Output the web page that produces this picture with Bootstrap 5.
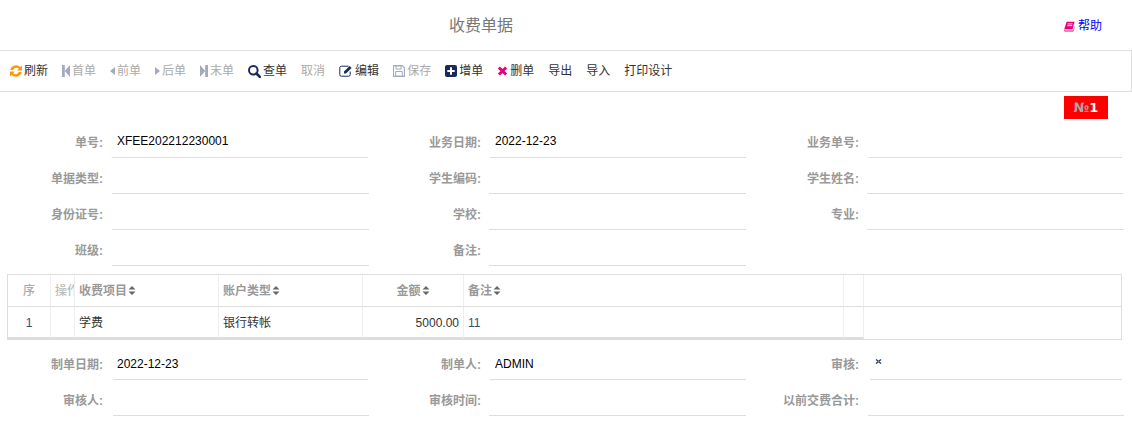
<!DOCTYPE html>
<html lang="zh">
<head>
<meta charset="utf-8">
<title>收费单据</title>
<link href="https://cdn.jsdelivr.net/npm/bootstrap@5.3.0/dist/css/bootstrap.min.css" rel="stylesheet">
<style>
html,body{height:438px;overflow:hidden}
body{font-family:"Liberation Sans","Noto Sans CJK SC",sans-serif;font-size:12px;line-height:16px;color:#333;background:#fff}
.page-head{height:50px}
.page-title{width:962px;font-size:16px;line-height:20px;color:#777;font-weight:400;margin:0;text-align:center;padding-top:1px}
.help-link{color:#00f;text-decoration:none;margin-left:102px;gap:3px;padding-top:2px}
.tool-bar{height:42px;border:1px solid #ddd;border-left:0;padding-left:10px;gap:14px;width:1132px}
.tool-item{gap:2px;color:#333;white-space:nowrap}
.tool-item.off{color:#aaa}
.tool-item svg{display:block;flex:none}
.no-wrap{height:30px;padding:4px 24px 0 0}
.no-tag{width:44px;height:23px;background:#f00;color:#fff;font:bold 13px/23px "DejaVu Sans",sans-serif;text-align:center}
.no-tag span{color:#aaa}
.f-row{height:36px}
.f-cell{height:36px}
.f-a{width:369px}.f-b{width:377px}.f-c{width:376px}
.f-label{color:#999;font-weight:700;text-align:right;padding-top:13px;flex:none}
.f-a .f-label{width:103px;margin-right:1px}
.f-b .f-label{width:112px;margin-right:1px}
.f-c .f-label{width:113px}
.f-field{flex:1;margin-left:8px;border-bottom:1px solid #ddd;color:#000;padding:11px 0 0 5px}
.f-s7{margin-left:7px}.f-s9{margin-left:9px}.f-s10{margin-left:10px}.f-s11{margin-left:11px}
.f-e1{margin-right:1px}.f-en1{margin-right:-1px}.f-en2{margin-right:-2px}
.tb-wrap{margin:8px 10px 0 7px;border:1px solid #ddd;height:66px;width:1115px}
.grid-t{table-layout:fixed;border-collapse:separate;border-spacing:0;width:1113px;margin:0}
.grid-t th,.grid-t td{padding:0 4px;border-right:1px solid #eee;overflow:hidden;white-space:nowrap}
.grid-t th{height:32px;border-bottom:1px solid #ddd;color:#999;font-weight:700}
.grid-t td{height:32px;border-bottom:2px solid #ddd;color:#333;font-weight:400;padding-top:1px}
.grid-t .c-end{border-right:0;border-bottom:0}
.grid-t td.c-end{height:30px}
.grid-t th.c-end{border-bottom:1px solid #ddd}
.c-no{color:#2b5278!important;text-align:center}
.c-blue{color:#2b5278!important}
.c-no-h{text-align:center;color:#aaa!important;font-weight:500!important}
.c-op{color:#bbb!important;font-weight:500!important}
.sort-i{display:inline-block;vertical-align:-1px;margin-left:1px}
.foot-form{margin-top:4px}
.foot-form .f-field{padding-top:12px}
.mark-x{display:block;margin-top:2px}
</style>
</head>
<body>
<header class="page-head d-flex align-items-center">
  <h1 class="page-title">收费单据</h1>
  <a class="help-link d-flex align-items-center" href="#">
    <svg width="11" height="11" viewBox="0 0 11 11"><path d="M2.600.8h8L8.600 8.300H.9C.4 8.300.2 8.800.5 9.200c.2.3.5.4.9.4h7.900l1.200-5v1.900L9.500 10.600H1.300C.5 10.600 0 9.900 0 9.100Z" fill="#e6007e"/><path d="M3.600 2.900h5M3.200 4.700h5" stroke="#fff" stroke-width=".9"/></svg>
    <span>帮助</span>
  </a>
</header>
<nav class="tool-bar d-flex align-items-center">
  <div class="tool-item d-flex align-items-center">
    <svg width="12" height="12" viewBox="0 0 12 12"><path d="M12 .5v5H7.200l1.700-1.700A3.400 3.400 0 0 0 3.200 5H.3A6 6 0 0 1 10.300 2ZM0 11.500v-5h4.800L3.100 8.200A3.400 3.400 0 0 0 8.800 7h2.900A6 6 0 0 1 1.700 10Z" fill="#ff9800"/></svg>
    <span>刷新</span>
  </div>
  <div class="tool-item off d-flex align-items-center">
    <svg width="8" height="12" viewBox="0 0 8 12"><path d="M0 0h2.800v12H0ZM8 0v12L2.800 6Z" fill="#a3a9c0"/></svg>
    <span>首单</span>
  </div>
  <div class="tool-item off d-flex align-items-center">
    <svg width="5" height="8" viewBox="0 0 5 8"><path d="M5 0v8L0 4Z" fill="#a3a9c0"/></svg>
    <span>前单</span>
  </div>
  <div class="tool-item off d-flex align-items-center">
    <svg width="5" height="8" viewBox="0 0 5 8"><path d="M0 0v8l5-4Z" fill="#a3a9c0"/></svg>
    <span>后单</span>
  </div>
  <div class="tool-item off d-flex align-items-center">
    <svg width="8" height="12" viewBox="0 0 8 12"><path d="M8 0H5.200v12H8ZM0 0v12L5.200 6Z" fill="#a3a9c0"/></svg>
    <span>末单</span>
  </div>
  <div class="tool-item d-flex align-items-center">
    <svg width="13" height="13" viewBox="0 0 13 13"><circle cx="5.300" cy="5.300" r="4.300" fill="none" stroke="#1b2a5c" stroke-width="2"/><path d="M8.500 8.500l3.300 3.300" stroke="#1b2a5c" stroke-width="2.600" stroke-linecap="round"/></svg>
    <span>查单</span>
  </div>
  <div class="tool-item off d-flex align-items-center"><span>取消</span></div>
  <div class="tool-item d-flex align-items-center">
    <svg width="14" height="12" viewBox="0 0 14 12"><path d="M9.500 1.200H2.300A1.500 1.500 0 0 0 .8 2.700v7A1.500 1.500 0 0 0 2.300 11.200h7.400a1.500 1.500 0 0 0 1.500-1.500V6.500" fill="none" stroke="#1b2a5c" stroke-width="1"/><path d="M5 6.500 10.600.9 12.600 2.900 7 8.500H5Z" fill="#1b2a5c"/></svg>
    <span>编辑</span>
  </div>
  <div class="tool-item off d-flex align-items-center">
    <svg width="12" height="12" viewBox="0 0 12 12"><path d="M.6.6h8.600l2.200 2.200v8.600H.6Z" fill="none" stroke="#a3a9c0" stroke-width="1.100"/><path d="M3 .8h5v3.300H3ZM2.700 6.500h6.600v4.700H2.700Z" fill="none" stroke="#a3a9c0"/></svg>
    <span>保存</span>
  </div>
  <div class="tool-item d-flex align-items-center">
    <svg width="12" height="12" viewBox="0 0 12 12"><rect width="12" height="12" rx="2" fill="#1b2a5c"/><path d="M5 2.300h2V5h2.700v2H7v2.700H5V7H2.300V5H5Z" fill="#fff"/></svg>
    <span>增单</span>
  </div>
  <div class="tool-item d-flex align-items-center">
    <svg width="11" height="10" viewBox="0 0 11 10"><path d="M1.900 1.500 9.100 8.500M9.100 1.500 1.900 8.500" stroke="#e6007e" stroke-width="3"/></svg>
    <span>删单</span>
  </div>
  <div class="tool-item d-flex align-items-center"><span>导出</span></div>
  <div class="tool-item d-flex align-items-center"><span>导入</span></div>
  <div class="tool-item d-flex align-items-center"><span>打印设计</span></div>
</nav>
<div class="no-wrap d-flex justify-content-end">
  <div class="no-tag"><span>№</span>1</div>
</div>
<section>
  <div class="f-row d-flex">
    <div class="f-cell f-a d-flex"><label class="f-label">单号:</label><div class="f-field f-e1">XFEE202212230001</div></div>
    <div class="f-cell f-b d-flex"><label class="f-label">业务日期:</label><div class="f-field">2022-12-23</div></div>
    <div class="f-cell f-c d-flex"><label class="f-label">业务单号:</label><div class="f-field f-s10"></div></div>
  </div>
  <div class="f-row d-flex">
    <div class="f-cell f-a d-flex"><label class="f-label">单据类型:</label><div class="f-field"></div></div>
    <div class="f-cell f-b d-flex"><label class="f-label">学生编码:</label><div class="f-field f-s7"></div></div>
    <div class="f-cell f-c d-flex"><label class="f-label">学生姓名:</label><div class="f-field f-en1"></div></div>
  </div>
  <div class="f-row d-flex">
    <div class="f-cell f-a d-flex"><label class="f-label">身份证号:</label><div class="f-field"></div></div>
    <div class="f-cell f-b d-flex"><label class="f-label">学校:</label><div class="f-field f-s7"></div></div>
    <div class="f-cell f-c d-flex"><label class="f-label">专业:</label><div class="f-field f-en2"></div></div>
  </div>
  <div class="f-row d-flex">
    <div class="f-cell f-a d-flex"><label class="f-label">班级:</label><div class="f-field"></div></div>
    <div class="f-cell f-b d-flex"><label class="f-label">备注:</label><div class="f-field f-s7"></div></div>
  </div>
</section>
<div class="tb-wrap">
  <table class="grid-t">
    <colgroup><col style="width:43px"><col style="width:24px"><col style="width:144px"><col style="width:144px"><col style="width:101px"><col style="width:380px"><col style="width:20px"><col></colgroup>
    <thead>
      <tr>
        <th class="c-no-h">序</th>
        <th class="c-op">操作</th>
        <th>收费项目<svg class="sort-i" width="8" height="11" viewBox="0 0 8 11"><path d="M.5 4.500 4 1l3.500 3.500ZM.5 6.500 4 10l3.500-3.500Z" fill="#666"/></svg></th>
        <th>账户类型<svg class="sort-i" width="8" height="11" viewBox="0 0 8 11"><path d="M.5 4.500 4 1l3.500 3.500ZM.5 6.500 4 10l3.500-3.500Z" fill="#666"/></svg></th>
        <th class="text-center">金额<svg class="sort-i" width="8" height="11" viewBox="0 0 8 11"><path d="M.5 4.500 4 1l3.500 3.500ZM.5 6.500 4 10l3.500-3.500Z" fill="#666"/></svg></th>
        <th>备注<svg class="sort-i" width="8" height="11" viewBox="0 0 8 11"><path d="M.5 4.500 4 1l3.500 3.500ZM.5 6.500 4 10l3.500-3.500Z" fill="#666"/></svg></th>
        <th></th>
        <th class="c-end"></th>
      </tr>
    </thead>
    <tbody>
      <tr>
        <td class="c-no">1</td>
        <td></td>
        <td>学费</td>
        <td>银行转帐</td>
        <td class="text-end">5000.00</td>
        <td class="c-blue">11</td>
        <td></td>
        <td class="c-end"></td>
      </tr>
    </tbody>
  </table>
</div>
<section class="foot-form">
  <div class="f-row d-flex">
    <div class="f-cell f-a d-flex"><label class="f-label">制单日期:</label><div class="f-field f-s9 f-e1 ps-1">2022-12-23</div></div>
    <div class="f-cell f-b d-flex"><label class="f-label">制单人:</label><div class="f-field">ADMIN</div></div>
    <div class="f-cell f-c d-flex"><label class="f-label">审核:</label><div class="f-field f-s11"><svg class="mark-x" width="7" height="7" viewBox="0 0 7 7"><path d="M1 1.500 6 5.500M6 1.500 1 5.500" stroke="#1b3a6c" stroke-width="1.300"/><circle cx="3.500" cy="3.500" r=".8" fill="#b8860b"/></svg></div></div>
  </div>
  <div class="f-row d-flex">
    <div class="f-cell f-a d-flex"><label class="f-label">审核人:</label><div class="f-field f-s9"></div></div>
    <div class="f-cell f-b d-flex"><label class="f-label">审核时间:</label><div class="f-field f-s7"></div></div>
    <div class="f-cell f-c d-flex"><label class="f-label">以前交费合计:</label><div class="f-field f-s9 f-en2"></div></div>
  </div>
</section>
<script src="https://cdn.jsdelivr.net/npm/bootstrap@5.3.0/dist/js/bootstrap.bundle.min.js"></script>
</body>
</html>
